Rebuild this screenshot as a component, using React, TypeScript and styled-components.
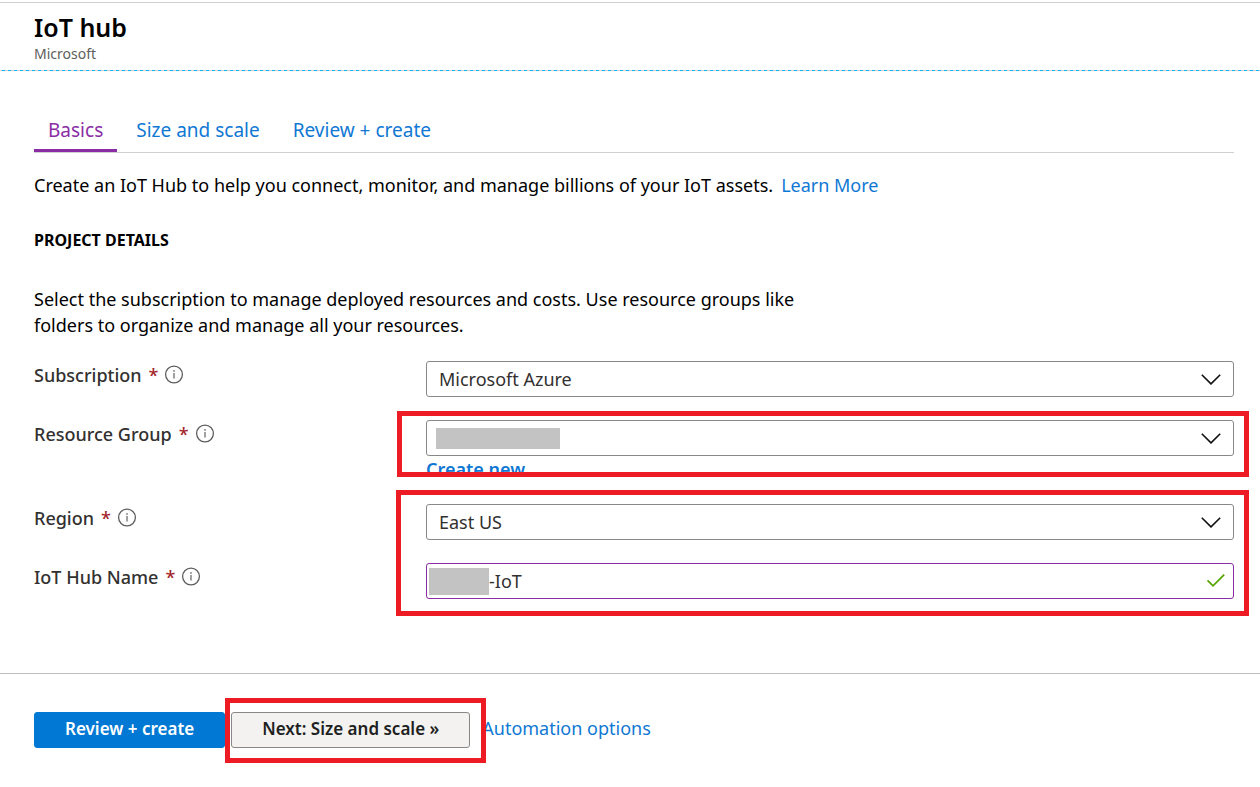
import React from "react";
import styled, { createGlobalStyle } from "styled-components";

const GlobalStyle = createGlobalStyle`
  *, *::before, *::after { box-sizing: border-box; }
  body {
    margin: 0;
    background: #fff;
    color: #000;
    font-family: "Noto Sans", "Open Sans", sans-serif;
    font-size: 18px;
    line-height: 26px;
  }
  h1, h2, p { margin: 0; }
  button, input, select { font: inherit; }
`;

const Page = styled.div`
  padding-top: 2px;
`;

const Header = styled.header`
  border-top: 1px solid #d2d0ce;
  padding: 8px 26px 7px 34px;
`;

const DashedRule = styled.div`
  height: 1px;
  background: repeating-linear-gradient(90deg, #d2d0ce 0 2px, #00b7f1 2px 5px, #d2d0ce 5px 6px);
`;

const Title = styled.h1`
  padding-bottom: 2px;
  font-size: 25px;
  font-weight: 600;
  line-height: 32px;
`;

const Publisher = styled.p`
  color: #605e5c;
  font-size: 14px;
  line-height: 18px;
`;

const Main = styled.main`
  padding: 36px 26px 74px 34px;
`;

const Tabs = styled.div`
  display: flex;
  gap: 5px;
  border-bottom: 1px solid #d2d0ce;
`;

const Tab = styled.button<{ $active?: boolean }>`
  height: 45px;
  padding: 3px 14px 0;
  border: 0;
  border-bottom: 3px solid ${(p) => (p.$active ? "#8a2da5" : "transparent")};
  background: none;
  color: ${(p) => (p.$active ? "#8a2da5" : "#0f78d4")};
  font-size: 19px;
`;

const Link = styled.a`
  color: #0f78d4;
  text-decoration: none;
`;

const CreateLink = styled(Link)`
  display: block;
  width: fit-content;
  padding-top: 2px;
  font-weight: 600;
  line-height: 23px;
`;

const Intro = styled.p`
  display: flex;
  flex-wrap: wrap;
  column-gap: 8px;
  margin-top: 19px;
`;

const SectionTitle = styled.h2`
  margin-top: 29px;
  font-size: 16px;
  font-weight: 700;
`;

const Description = styled.p`
  max-width: 800px;
  margin-top: 33px;
`;

const Form = styled.form`
  display: flex;
  flex-direction: column;
  gap: 23px;
  margin-top: 23px;
`;

const Row = styled.div`
  display: grid;
  grid-template-columns: 392px 1fr;
`;

const Label = styled.label`
  display: flex;
  align-items: center;
  height: 28px;
  color: #323130;
  font-weight: 500;
`;

const Required = styled.span`
  margin: 0 6px 0 7px;
  color: #a4262c;
`;

const Field = styled.div`
  position: relative;
`;

const Control = styled.div`
  position: relative;
  height: 36px;
`;

const Select = styled.select`
  display: block;
  width: 100%;
  height: 36px;
  padding: 0 40px 0 12px;
  border: 1px solid #8a8886;
  border-radius: 3px;
  appearance: none;
  background: #fff;
  color: #323130;
`;

const NameInput = styled.input`
  display: block;
  width: 100%;
  height: 36px;
  padding: 0 40px 0 62px;
  border: 1px solid #8a2da5;
  border-radius: 3px;
  background: #fff;
  color: #323130;
`;

const Marker = styled.span<{ $right: number }>`
  position: absolute;
  top: 0;
  right: ${(p) => p.$right}px;
  display: flex;
  align-items: center;
  height: 36px;
  pointer-events: none;
`;

const Mask = styled.span<{ $left: number; $top: number; $width: number; $height: number }>`
  position: absolute;
  left: ${(p) => p.$left}px;
  top: ${(p) => p.$top}px;
  width: ${(p) => p.$width}px;
  height: ${(p) => p.$height}px;
  background: #c3c3c3;
`;

const HighlightGroup = styled.div`
  position: relative;
  display: flex;
  flex-direction: column;
  gap: 23px;
`;

const Highlight = styled.div<{ $inset: string }>`
  position: absolute;
  z-index: 1;
  inset: ${(p) => p.$inset};
  border: 5px solid #ed1c24;
  pointer-events: none;
`;

const Footer = styled.footer`
  display: flex;
  align-items: baseline;
  border-top: 1px solid #bebebe;
  padding: 38px 26px 38px 34px;
`;

const Button = styled.button<{ $primary?: boolean }>`
  display: block;
  height: 36px;
  padding: 0 30px 2px;
  border: 1px solid ${(p) => (p.$primary ? "#0078d4" : "#8a8886")};
  border-radius: 3px;
  background: ${(p) => (p.$primary ? "#0078d4" : "#f3f2f1")};
  color: ${(p) => (p.$primary ? "#fff" : "#201f1e")};
  font-size: 17px;
  font-weight: 600;
`;

const HighlightedAction = styled.div`
  position: relative;
  margin: 0 12px 0 6px;
`;

function InfoIcon() {
  return (
    <svg width="20" height="20" viewBox="0 0 20 20" fill="none" aria-hidden="true">
      <circle cx="10" cy="9.5" r="8.4" stroke="#605e5c" strokeWidth="1.3" />
      <path d="M10 8v5.6" stroke="#7a7876" strokeWidth="1.4" />
      <circle cx="10" cy="5.9" r=".9" fill="#7a7876" />
    </svg>
  );
}

function Chevron() {
  return (
    <Marker $right={13}>
      <svg width="20" height="12" viewBox="0 0 20 12" fill="none" aria-hidden="true">
        <path d="M.8 1.7 10 10.9l9.2-9.2" stroke="#111" strokeWidth="1.6" />
      </svg>
    </Marker>
  );
}

function FieldLabel({ id, children }: { id: string; children: string }) {
  return (
    <Label htmlFor={id}>
      {children}
      <Required>*</Required>
      <InfoIcon />
    </Label>
  );
}

function SelectControl({ id, value, children }: { id: string; value: string; children?: React.ReactNode }) {
  return (
    <Control>
      <Select id={id} defaultValue={value}>
        <option value={value}>{value}</option>
      </Select>
      {children}
      <Chevron />
    </Control>
  );
}

export default function App() {
  return (
    <>
      <GlobalStyle />
      <Page>
        <Header>
          <Title>IoT hub</Title>
          <Publisher>Microsoft</Publisher>
        </Header>
        <DashedRule />
        <Main>
          <Tabs role="tablist">
            <Tab role="tab" aria-selected="true" $active>Basics</Tab>
            <Tab role="tab" aria-selected="false">Size and scale</Tab>
            <Tab role="tab" aria-selected="false">Review + create</Tab>
          </Tabs>
          <Intro>
            <span>Create an IoT Hub to help you connect, monitor, and manage billions of your IoT assets.</span>
            <Link href="#learn-more">Learn More</Link>
          </Intro>
          <SectionTitle>PROJECT DETAILS</SectionTitle>
          <Description>
            Select the subscription to manage deployed resources and costs. Use resource groups like
            folders to organize and manage all your resources.
          </Description>
          <Form onSubmit={(e) => e.preventDefault()}>
            <Row>
              <FieldLabel id="subscription">Subscription</FieldLabel>
              <SelectControl id="subscription" value="Microsoft Azure" />
            </Row>
            <Row>
              <FieldLabel id="resource-group">Resource Group</FieldLabel>
              <Field>
                <SelectControl id="resource-group" value="">
                  <Mask $left={10} $top={8} $width={124} $height={21} />
                </SelectControl>
                <CreateLink href="#create-new">Create new</CreateLink>
                <Highlight $inset="-9px -15px 4px -29px" />
              </Field>
            </Row>
            <HighlightGroup>
              <Row>
                <FieldLabel id="region">Region</FieldLabel>
                <SelectControl id="region" value="East US" />
              </Row>
              <Row>
                <FieldLabel id="hub-name">IoT Hub Name</FieldLabel>
                <Control>
                  <NameInput id="hub-name" type="text" defaultValue="-IoT" />
                  <Mask $left={3} $top={5} $width={60} $height={27} />
                  <Marker $right={8}>
                    <svg width="20" height="14" viewBox="0 0 20 14" fill="none" aria-hidden="true">
                      <path d="m1.5 6.3 5.5 5.5L18.2.6" stroke="#57a300" strokeWidth="1.7" />
                    </svg>
                  </Marker>
                </Control>
              </Row>
              <Highlight $inset="-14px -15px -17px 362px" />
            </HighlightGroup>
          </Form>
        </Main>
        <Footer>
          <Button type="button" $primary>Review + create</Button>
          <HighlightedAction>
            <Button type="button">Next: Size and scale »</Button>
            <Highlight $inset="-14px -16px -15px -6px" />
          </HighlightedAction>
          <Link href="#automation">Automation options</Link>
        </Footer>
      </Page>
    </>
  );
}
